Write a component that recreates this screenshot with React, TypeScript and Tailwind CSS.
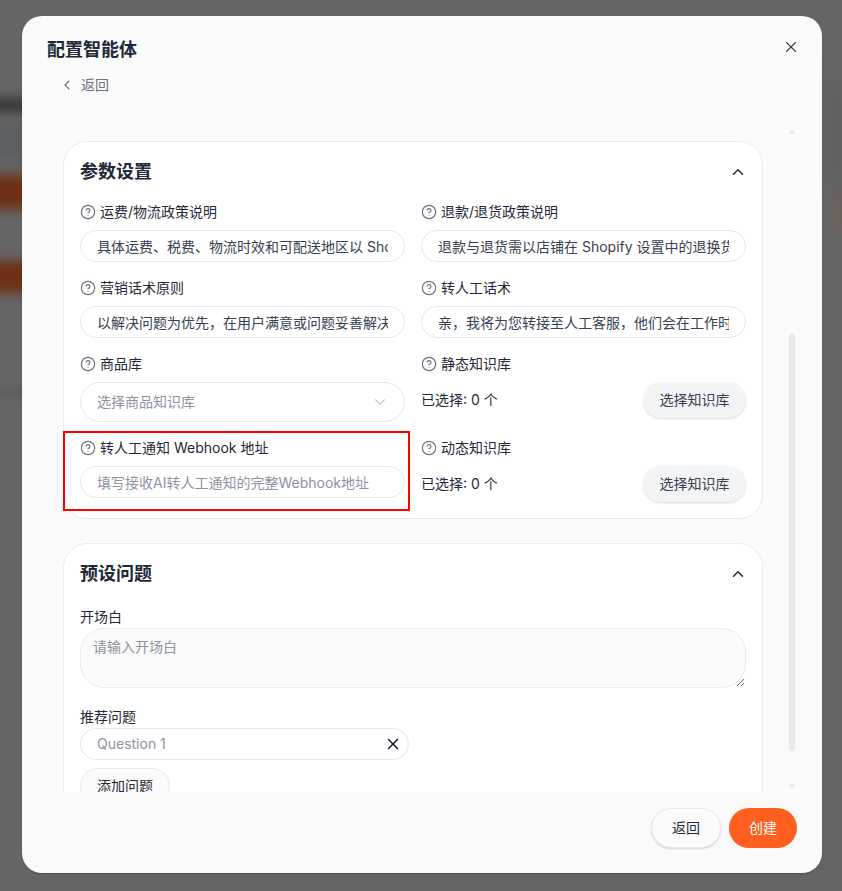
import { ChevronDown, ChevronLeft, ChevronUp, CircleHelp, X } from "lucide-react";

const FONT = "font-['Inter','Noto_Sans_CJK_SC',sans-serif]";

function Label({ text }: { text: string }) {
  return (
    <div className="flex items-center gap-1 h-5 mb-2 text-sm text-[#1f2937]">
      <CircleHelp size={16} strokeWidth={1.75} className="text-[#6b7280] shrink-0" />
      <span>{text}</span>
    </div>
  );
}

function TextField({ label, value, placeholder }: { label: string; value?: string; placeholder?: string }) {
  return (
    <div>
      <Label text={label} />
      <input
        readOnly
        value={value}
        placeholder={placeholder}
        className="block w-full h-8 px-4 rounded-full border border-[#e5e7eb] bg-white text-sm text-[#374151] placeholder:text-[#8d93a0] outline-none"
      />
    </div>
  );
}

function KnowledgePicker({ label }: { label: string }) {
  return (
    <div>
      <Label text={label} />
      <div className="flex items-center justify-between h-9 text-sm text-[#1f2937]">
        <span>已选择: 0 个</span>
        <button className="h-9 w-[103px] rounded-full bg-[#f3f4f6] shadow-[0_1px_2px_rgba(0,0,0,0.15)] text-sm text-[#374151]">
          选择知识库
        </button>
      </div>
    </div>
  );
}

function Section({ title, className, children }: { title: string; className?: string; children: React.ReactNode }) {
  return (
    <section className={`relative rounded-3xl border border-[#e9eaec] bg-white px-4 ${className ?? ""}`}>
      <div className="flex items-center justify-between h-7 mt-4 mb-4">
        <h2 className="text-lg font-semibold text-[#1f2937]">{title}</h2>
        <ChevronUp size={18} strokeWidth={2} className="text-[#1f2937] -mr-[1px]" />
      </div>
      {children}
    </section>
  );
}

export default function App() {
  return (
    <div className={`relative h-[891px] w-full overflow-hidden bg-[#656565] ${FONT}`}>
      {/* blurred page behind the dialog */}
      <div className="absolute -left-5 top-[97px] h-4 w-[70px] bg-[#3a3c3e] blur-[5px]" />
      <div className="absolute -left-5 top-[120px] h-10 w-[70px] bg-[#5c5f61] blur-[6px]" />
      <div className="absolute -left-5 top-[175px] h-[34px] w-[70px] bg-[#6d3016] blur-[6px]" />
      <div className="absolute -left-5 top-[261px] h-[32px] w-[70px] bg-[#6d3016] blur-[6px]" />
      <div className="absolute -left-5 top-[390px] h-1.5 w-[70px] bg-[#58595a] blur-[4px]" />
      <div className="absolute left-[834px] top-[190px] h-10 w-5 bg-[#6b5f5b] blur-[4px]" />
      <div className="absolute left-[815px] top-[80px] h-[100px] w-10 bg-[#5f6163] blur-[8px]" />

      <div className="absolute left-[22px] top-4 flex h-[857px] w-[800px] flex-col rounded-[20px] bg-[#fafafa] shadow-[0_1px_2px_rgba(0,0,0,0.2)]">
        <header className="relative h-[125px] shrink-0 pl-[25px] pt-5">
          <h1 className="text-lg font-semibold leading-7 text-[#1f2937]">配置智能体</h1>
          <div className="mt-[11px] ml-3 flex items-center gap-1.5 text-sm leading-5 text-[#6b7280]">
            <ChevronLeft size={16} strokeWidth={1.75} />
            <span>返回</span>
          </div>
          <button className="absolute right-[22px] top-[22px] text-[#374151]">
            <X size={18} strokeWidth={1.5} />
          </button>
        </header>

        <div className="relative h-[651px] shrink-0 overflow-hidden pl-[41px] pr-[59px]">
          <Section title="参数设置" className="pb-4">
            <div className="grid grid-cols-2 gap-x-4 gap-y-4">
              <TextField label="运费/物流政策说明" value="具体运费、税费、物流时效和可配送地区以 Shopify 设置为准" />
              <TextField label="退款/退货政策说明" value="退款与退货需以店铺在 Shopify 设置中的退换货政策为准" />
              <TextField label="营销话术原则" value="以解决问题为优先，在用户满意或问题妥善解决后再推荐商品" />
              <TextField label="转人工话术" value="亲，我将为您转接至人工客服，他们会在工作时间内尽快回复您" />
              <div>
                <Label text="商品库" />
                <div className="flex h-10 items-center justify-between rounded-full border border-[#e5e7eb] bg-white pl-4 pr-[15px] text-sm text-[#8d93a0]">
                  <span>选择商品知识库</span>
                  <ChevronDown size={18} strokeWidth={1.5} className="text-[#c4c7cc]" />
                </div>
              </div>
              <KnowledgePicker label="静态知识库" />
              <TextField label="转人工通知 Webhook 地址" placeholder="填写接收AI转人工通知的完整Webhook地址" />
              <KnowledgePicker label="动态知识库" />
            </div>
            <div className="pointer-events-none absolute -left-px top-[289px] h-20 w-[347px] border-2 border-[#ff0000]" />
          </Section>

          <Section title="预设问题" className="mt-6 pb-6">
            <div className="pt-[3px] text-sm leading-5 text-[#1f2937]">开场白</div>
            <textarea
              placeholder="请输入开场白"
              className="mt-[1px] block h-[60px] w-full resize-y rounded-3xl border border-[#e9eaec] bg-[#fafafa] px-3 py-2 text-sm text-[#374151] placeholder:text-[#8d93a0] outline-none"
            />
            <div className="mt-[19px] text-sm leading-5 text-[#1f2937]">推荐问题</div>
            <div className="mt-[1px] flex h-8 w-[329px] items-center justify-between rounded-full border border-[#e5e7eb] bg-white pl-4 pr-1.5 text-sm text-[#8d93a0]">
              <span>Question 1</span>
              <X size={18} className="text-[#111827]" />
            </div>
            <button className="mt-2 h-9 w-[90px] rounded-full border border-[#e5e7eb] bg-[#fafafa] text-sm text-[#1f2937]">
              添加问题
            </button>
          </Section>
        </div>

        {/* scrollbar */}
        <div className="absolute left-[767px] top-[318px] h-[417px] w-1.5 rounded-b-sm bg-[#e8e9ed]" />
        <div className="absolute left-[766px] top-[113px] h-0 w-0 border-x-4 border-b-[5px] border-x-transparent border-b-[#e8e9ed]" />
        <div className="absolute left-[766px] top-[768px] h-0 w-0 border-x-4 border-t-[5px] border-x-transparent border-t-[#e8e9ed]" />

        <footer className="flex flex-1 items-start justify-end gap-2 pr-[25px] pt-4">
          <button className="h-10 w-[70px] rounded-full border border-[#e5e7eb] bg-[#fafafa] text-sm text-[#1f2937] shadow-[0_1px_2px_rgba(0,0,0,0.15)]">
            返回
          </button>
          <button className="h-10 w-[68px] rounded-full bg-[#ff5f1f] text-sm text-white">创建</button>
        </footer>
      </div>
    </div>
  );
}
